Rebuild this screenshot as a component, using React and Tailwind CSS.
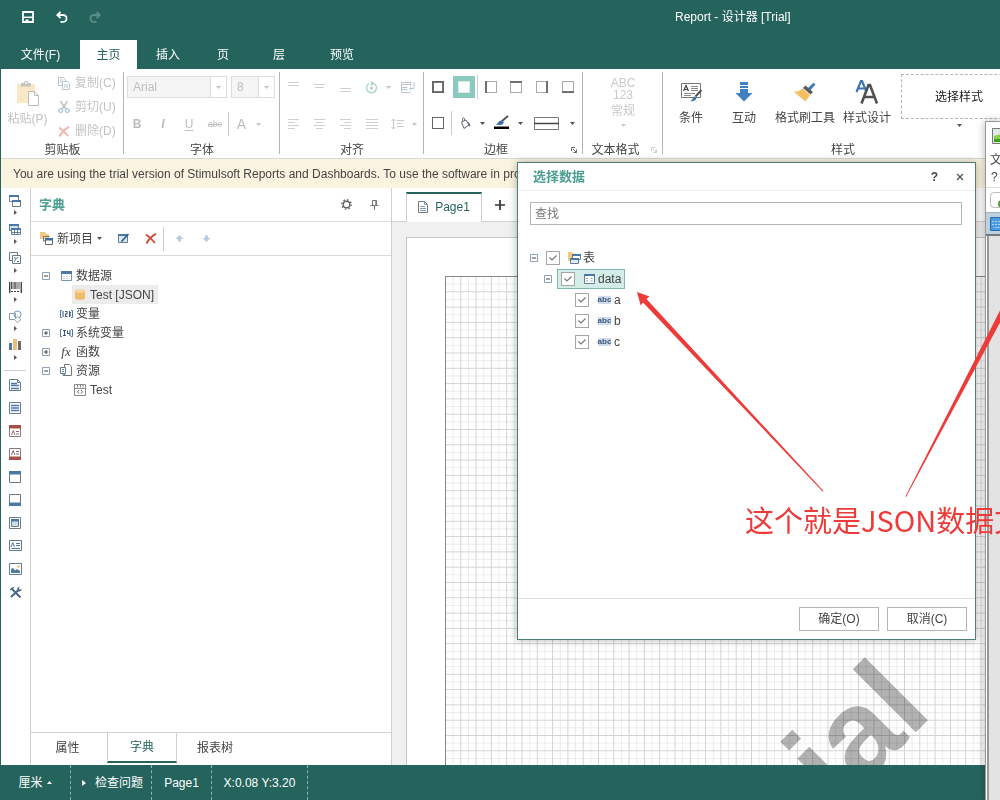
import React from "react";

const Svg = ({ w, h, className = "", children }) => (
  <svg width={w} height={h} viewBox={`0 0 ${w} ${h}`} className={`shrink-0 ${className}`} fill="none" aria-hidden="true">
    {children}
  </svg>
);

const Caret = ({ color = "#555" }) => (
  <Svg w={5} h={3}><path d="M0 0h5L2.5 3z" fill={color} /></Svg>
);

/* ---------- Title bar and ribbon tabs ---------- */

const SaveIcon = () => (
  <Svg w={12} h={12}>
    <path d="M1 1h10v10H1z" stroke="#fff" strokeWidth="1.800" />
    <path d="M2 6.300h8" stroke="#fff" strokeWidth="1.500" />
    <path d="M3.500 8.500h3v2.500h-3z" fill="#fff" />
  </Svg>
);
const UndoIcon = ({ flip, color }) => (
  <Svg w={12} h={12} className={flip ? "-scale-x-100" : ""}>
    <path d="M4.5.8 1.3 4l3.2 3.2M1.5 4h5.6a3.4 3.4 0 0 1 0 6.9H4.5" stroke={color} strokeWidth="1.8" />
  </Svg>
);

const tabs = [
  ["文件(F)", "w-[79px]"],
  ["主页", "w-[57px]"],
  ["插入", "w-[62px]"],
  ["页", "w-[48px]"],
  ["层", "w-[64px]"],
  ["预览", "w-[62px]"],
];

const Header = () => (
  <header className="shrink-0 bg-[#25645c] text-white">
    <div className="flex h-[40px] items-center pb-[6px] pl-[16px]">
      <button aria-label="保存" className="flex h-6 w-6 items-center justify-center"><SaveIcon /></button>
      <button aria-label="撤消" className="ml-[10px] flex h-6 w-6 items-center justify-center"><UndoIcon color="#fff" /></button>
      <button aria-label="恢复" disabled className="ml-[9px] flex h-6 w-6 items-center justify-center"><UndoIcon flip color="#5d8f88" /></button>
      <h1 className="ml-[568px] text-[12px] whitespace-nowrap">Report - 设计器 [Trial]</h1>
    </div>
    <nav className="flex h-[29px] pl-px">
      {tabs.map(([t, w], i) => (
        <button key={t} className={`${w} shrink-0 ${i === 1 ? "bg-white text-[#25645c]" : "text-white"}`}>{t}</button>
      ))}
    </nav>
  </header>
);

/* ---------- Ribbon ---------- */

const Group = ({ label, width, corner, faint, children }) => (
  <section className={`${width} relative flex shrink-0 flex-col`}>
    <div className="flex-1">{children}</div>
    <div className={`flex h-[17px] items-center justify-center text-[#444] ${corner ? "pr-[15px]" : ""}`}>{label}</div>
    <span className="absolute right-0 top-[3px] bottom-[4px] w-px bg-[#b4b4b4]" />
    {corner && (
      <button aria-label={`${label} 设置`} className="absolute right-[6px] bottom-[5px]">
        <Svg w={6} h={6}><path d="M.5 4V.5H4M2 2l3.500 3.500M5.500 2.500v3h-3" stroke={faint ? "#ccc" : "#666"} strokeWidth="1" /></Svg>
      </button>
    )}
  </section>
);

const CopyIcon = () => (
  <Svg w={12} h={13}>
    <path d="M.5.5h5l2 2v6h-7z" stroke="#b9c6d2" fill="#fff" /><path d="M2 3h3M2 5h2" stroke="#b9c6d2" />
    <path d="M4.500 4.500h5l2 2v6h-7z" stroke="#b9c6d2" fill="#fff" /><path d="M6 8h4M6 10h4" stroke="#b9c6d2" />
  </Svg>
);
const CutIcon = () => (
  <Svg w={12} h={12}>
    <path d="M2.500 0 8 8.300M9.500 0 4 8.300" stroke="#b5b5b5" strokeWidth="1.300" />
    <circle cx="2.700" cy="9.500" r="1.900" stroke="#a7c6e4" strokeWidth="1.300" /><circle cx="9.300" cy="9.500" r="1.900" stroke="#a7c6e4" strokeWidth="1.300" />
  </Svg>
);
const CrossIcon = ({ color }) => (
  <Svg w={12} h={11}><path d="M1 1.500c3 2 6 5 9 8.500M11 .8C7 3 3.500 6.500 1.500 10.500" stroke={color} strokeWidth="1.900" /></Svg>
);
const PasteIcon = () => (
  <Svg w={24} h={26}>
    <path d="M1 4h18v19H1z" fill="#f8e8c6" />
    <path d="M5 3h3c0-3 4-3 4 0h3v3.500H5z" fill="#c4c4c4" />
    <circle cx="10" cy="3" r="1" fill="#fff" />
    <path d="M12.500 11.500h6l4 4v10h-10z" fill="#fff" stroke="#bbb" /><path d="M18.500 11.500v4h4" stroke="#bbb" />
  </Svg>
);

const Combo = ({ label, value, width }) => (
  <div className={`${width} relative flex h-[22px] items-center border border-[#dcdcdc]`}>
    <select aria-label={label} disabled className="h-full w-full appearance-none bg-[#f5f5f5] pl-[5px] text-[12px] text-[#bdbdbd] opacity-100">
      <option>{value}</option>
    </select>
    <span className="pointer-events-none absolute inset-y-0 right-0 flex w-[16px] items-center justify-center border-l border-[#dcdcdc] bg-white"><Caret color="#c4c4c4" /></span>
  </div>
);

const Tool = ({ label, w = "w-[26px]", disabled, className = "", children }) => (
  <button aria-label={label} disabled={disabled} className={`flex h-[24px] shrink-0 items-center justify-center ${w} ${className}`}>{children}</button>
);

const Lines = ({ rows, dy = 0 }) => (
  <Svg w={13} h={12}>
    {rows.map(([x1, x2], i) => <path key={i} d={`M${x1} ${i * 3 + 1.5 + dy}H${x2}`} stroke="#cfcfcf" />)}
  </Svg>
);

const BoxIcon = ({ side, bg }) => {
  const d = { left: "M1 0v12", top: "M0 1h12", right: "M11 0v12", bottom: "M0 11h12" }[side];
  return (
    <Svg w={12} h={12}>
      <rect x=".5" y=".5" width="11" height="11" fill={bg || "#fff"} stroke={side === "none" ? "#d9eeea" : side === "all" || side === "thin" ? "#666" : "#aaa"} />
      {side === "all" && <rect x="1" y="1" width="10" height="10" stroke="#666" strokeWidth="1.800" />}
      {d && <path d={d} stroke="#666" strokeWidth="1.800" />}
    </Svg>
  );
};

const ConditionIcon = () => (
  <Svg w={23} h={22}>
    <path d="M1.500 2.500h19v14h-19z" fill="#fff" stroke="#777" />
    <path d="M3.500 10 6 4.500 8.500 10M4.500 8.500h3" stroke="#444" strokeWidth="1.200" />
    <path d="M11 5.500h7M11 7.500h7M11 9.500h7M4 12.500h11M4 14.500h7" stroke="#8a8a8a" />
    <path d="m21.500 9-6 6.500" stroke="#555" strokeWidth="2" />
    <path d="M10 20c3 0 2-4 4.500-4.500 2 .5 2.300 2 1.200 3.200C14.500 20 12 20.500 10 20z" fill="#3c78b8" />
  </Svg>
);
const InteractIcon = () => (
  <Svg w={18} h={20}><path d="M5 0h8v3H5zM5 4h8v2H5zM5 7h8v4h4.500L9 19.500.5 11H5z" fill="#4080c0" /></Svg>
);
const BrushIcon = () => (
  <Svg w={24} h={20}>
    <path d="M15 6 20.500.8l2 1.800-5 5.500z" fill="#3c78b8" />
    <path d="m12.500 3.500 7.500 6.500-2.500 2.500L10 6z" fill="#5c5c5c" />
    <path d="M9.500 6.500 17 13 12.500 19.500.5 9.500c3.500.5 6.500-.8 9-3z" fill="#f3bf5f" />
  </Svg>
);
const StyleIcon = () => (
  <Svg w={24} h={24}>
    <path d="M1.500 12 6 1h1l4.500 11M3.200 8.500h6.800" stroke="#3c78b8" strokeWidth="2.200" />
    <path d="M6.500 23.500 13.500 5h1.500l7 18.500M9 17h11" stroke="#505050" strokeWidth="2.600" />
  </Svg>
);

const BigButton = ({ w, label, icon }) => (
  <button className={`${w} flex shrink-0 flex-col items-center whitespace-nowrap text-[#444]`}>
    <span className="flex h-[26px] items-center">{icon}</span>
    <span className="mt-[4px] leading-[18px]">{label}</span>
  </button>
);

const Ribbon = () => (
  <div className="flex h-[90px] shrink-0 overflow-hidden border-b border-[#d8d8d8] bg-white">
    <Group label="剪贴板" width="w-[123px]">
      <div className="flex h-[72px] text-[#c3c3c3]">
        <button disabled className="flex w-[53px] flex-col items-center pt-[11px] whitespace-nowrap">
          <PasteIcon /><span className="mt-[4px] leading-[18px]">粘贴(P)</span>
        </button>
        <div className="flex flex-col pt-[2px] pl-[4px]">
          {[["复制(C)", <CopyIcon />], ["剪切(U)", <CutIcon />], ["删除(D)", <CrossIcon color="#f2b3ad" />]].map(([t, icon]) => (
            <button key={t} disabled className="flex h-[24px] shrink-0 items-center gap-[5px] whitespace-nowrap">{icon}{t}</button>
          ))}
        </div>
      </div>
    </Group>
    <Group label="字体" width="w-[156px]">
      <div className="flex gap-[4px] pt-[7px] pl-[3px]">
        <Combo label="字体" value="Arial" width="w-[100px]" />
        <Combo label="字号" value="8" width="w-[44px]" />
      </div>
      <div className="flex pt-[14px] text-[12px] text-[#bdbdbd]">
        <Tool label="粗体" disabled><b>B</b></Tool>
        <Tool label="斜体" disabled><i className="font-bold">I</i></Tool>
        <Tool label="下划线" disabled><span className="underline underline-offset-2">U</span></Tool>
        <Tool label="删除线" disabled><span className="text-[9px] line-through">abc</span></Tool>
        <Tool label="字体颜色" disabled className="border-l border-[#ccc]"><span className="text-[14px]">A</span></Tool>
        <Tool label="更多颜色" disabled w="w-[8px]"><Caret color="#c4c4c4" /></Tool>
      </div>
    </Group>
    <Group label="对齐" width="w-[144px]">
      <div className="flex pt-[6px]">
        <Tool label="顶端对齐" disabled><Lines rows={[[1, 12], [1, 12]]} /></Tool>
        <Tool label="垂直居中" disabled><Lines rows={[[1, 12], [2, 11]]} dy={2} /></Tool>
        <Tool label="底端对齐" disabled><Lines rows={[[1, 12], [1, 12]]} dy={6} /></Tool>
        <Tool label="旋转" disabled>
          <Svg w={13} h={13}><path d="M4 2.500A5 5 0 1 0 9 2.500" stroke="#a9d3cd" strokeWidth="1.400" /><path d="M6 0v5l3.500-2.500z" fill="#a9d3cd" /><circle cx="6.500" cy="7" r="1.500" fill="#a9d3cd" /></Svg>
        </Tool>
        <Tool label="旋转选项" disabled w="w-[8px]"><Caret color="#c4c4c4" /></Tool>
        <Tool label="自动换行" disabled className="ml-[3px]">
          <Svg w={14} h={13}><path d="M.5 1.500h9M.5 3.500h9M.5 6.500h6M.5 8.500h6M.5 11.500h9M.5 1v11M9.500 1v4M13 1v6.500H8.500M10.500 5.500l-2 2 2 2" stroke="#bcc8cf" /></Svg>
        </Tool>
      </div>
      <div className="flex pt-[13px]">
        <Tool label="左对齐" disabled><Lines rows={[[1, 12], [1, 8], [1, 12], [1, 8]]} /></Tool>
        <Tool label="居中" disabled><Lines rows={[[1, 12], [3, 10], [1, 12], [3, 10]]} /></Tool>
        <Tool label="右对齐" disabled><Lines rows={[[1, 12], [5, 12], [1, 12], [5, 12]]} /></Tool>
        <Tool label="两端对齐" disabled><Lines rows={[[1, 13], [1, 13], [1, 13], [1, 13]]} /></Tool>
        <Tool label="行距" disabled>
          <Svg w={13} h={12}><path d="M2.500 1v10M.5 3l2-2 2 2M.5 9l2 2 2-2M6 2.500h7M6 5.500h5M6 8.500h7" stroke="#c4cacd" /></Svg>
        </Tool>
        <Tool label="行距选项" disabled w="w-[8px]"><Caret color="#c4c4c4" /></Tool>
      </div>
    </Group>
    <Group label="边框" width="w-[159px]" corner>
      <div className="flex pt-[6px] pl-px">
        <Tool label="全部边框"><BoxIcon side="all" /></Tool>
        <Tool label="无边框"><span className="flex h-[22px] w-[22px] items-center justify-center bg-[#8cc9bf]"><BoxIcon side="none" /></span></Tool>
        <Tool label="左边框" className="border-l border-[#ccc]"><BoxIcon side="left" /></Tool>
        <Tool label="上边框"><BoxIcon side="top" /></Tool>
        <Tool label="右边框"><BoxIcon side="right" /></Tool>
        <Tool label="下边框"><BoxIcon side="bottom" /></Tool>
      </div>
      <div className="flex pt-[12px] pl-px">
        <Tool label="阴影"><BoxIcon side="thin" /></Tool>
        <Tool label="填充" className="border-l border-[#ccc]">
          <Svg w={12} h={13}><path d="M3.500 6V2c0-1.500 2-1.500 2 0v2" stroke="#777" /><path d="M2.500 5 7 3l3 5-5 3.500z" stroke="#666" fill="#fff" /><path d="M8.500 5c2 .3 2.800 2 2.800 5-1-.5-2.300-2-2.800-5z" fill="#5a6f86" /></Svg>
        </Tool>
        <Tool label="填充选项" w="w-[10px]"><Caret /></Tool>
        <Tool label="边框颜色" w="w-[28px]">
          <Svg w={15} h={16}><path d="m14 1-6 5" stroke="#555" strokeWidth="2" /><path d="M1 9.500c3 0 3-3.500 6-4 2.500 0 3.500 2 2 3.500-2 1.500-5 1-8 .5z" fill="#3c6fa8" /><path d="M0 11.500h15v2.500H0z" fill="#000" /></Svg>
        </Tool>
        <Tool label="颜色选项" w="w-[10px]"><Caret /></Tool>
        <Tool label="边框样式" w="w-[42px]">
          <Svg w={25} h={13}><path d="M.5.5h24v12H.5z" stroke="#777" /><path d="M0 6.500h25" stroke="#444" strokeWidth="1.500" /></Svg>
        </Tool>
        <Tool label="样式选项" w="w-[10px]"><Caret /></Tool>
      </div>
    </Group>
    <Group label="文本格式" width="w-[80px]" corner faint>
      <button disabled className="flex w-full flex-col items-center pt-[8px] text-[#c9c9c9]">
        <span className="text-[12px] leading-[12px]">ABC</span>
        <span className="text-[12px] leading-[12px]">123</span>
        <span className="mt-px leading-[18px]">常规</span>
        <span className="mt-[4px]"><Caret color="#ccc" /></span>
      </button>
    </Group>
    <section className="flex w-[360px] shrink-0 flex-col">
      <div className="flex flex-1 pt-[5px]">
        <div className="flex pt-[5px]">
          <BigButton w="w-[56px]" label="条件" icon={<ConditionIcon />} />
          <BigButton w="w-[50px]" label="互动" icon={<InteractIcon />} />
          <BigButton w="w-[72px]" label="格式刷工具" icon={<BrushIcon />} />
          <BigButton w="w-[52px]" label="样式设计" icon={<StyleIcon />} />
        </div>
        <div className="ml-[8px] flex flex-col items-center">
          <button className="h-[45px] w-[116px] border border-dashed border-[#b5b5b5] text-[#222]">选择样式</button>
          <button aria-label="更多样式" className="mt-[5px]"><Caret /></button>
        </div>
      </div>
      <div className="flex h-[17px] items-center justify-center text-[#444]">样式</div>
    </section>
  </div>
);

/* ---------- Left tool strip ---------- */

const B = "#4a79a8";
const G = "#6a7b8a";
const palette = [
  <Svg w={12} h={13}><path d="M.5 1.500h9v6h-9z" stroke={G} fill="#fff" /><path d="M0 1h10v2H0z" fill={B} /><path d="M3.500 6.500h8v6h-8z" stroke={G} fill="#fff" /><path d="M3 6h9v2H3z" fill={B} /></Svg>,
  <Svg w={12} h={13}><path d="M.5 1.500h9v6h-9z" stroke={G} fill="#cfe0ee" /><path d="M0 1h10v2H0z" fill={B} /><path d="M2.500 5.500h9v6h-9zM5.500 6v6M8.500 6v6M3 9.500h8" stroke={G} fill="#fff" /><path d="M2 5h10v2H2z" fill={B} /></Svg>,
  <Svg w={12} h={12}><path d="M.5.5h8v8h-8z" stroke={G} fill="#fff" /><path d="M3.500 3.500h8v8h-8z" stroke={G} fill="#fff" /><path d="M5 9.500c2 0 1-4 4-4M5 6h2M8 9.500h2" stroke={B} /></Svg>,
  <Svg w={13} h={11}><path d="M.7 0v11M6 0v7M12.300 0v11" stroke="#444" strokeWidth="1.400" /><path d="M2.500 0v7M4 0v7M8 0v7M10 0v7" stroke="#555" /><path d="M2 9.500h9" stroke="#444" strokeDasharray="2 1" /></Svg>,
  <Svg w={13} h={13}><path d="M.5 3.500h6v6h-6z" stroke="#8b9cab" fill="#fff" /><circle cx="8.500" cy="4.500" r="3.500" stroke="#6d98c2" /><path d="m8.500 6.500 3.500 3-3.500 3-3-3z" stroke="#8aa8c4" fill="#fff" /></Svg>,
  <Svg w={12} h={12}><path d="M0 4h3v7H0z" fill={B} /><path d="M4 0h4v11H4z" fill="#ecbf77" /><path d="M9 2h3v9H9z" fill="#6b6b6b" /></Svg>,
];
const Frame = ({ children, c = G }) => (
  <Svg w={12} h={12}><path d="M.5.5h11v11H.5z" stroke={c} fill="#fff" />{children}</Svg>
);
const bands = [
  <Svg w={12} h={12}><path d="M.5.5h8l3 3v8H.5z" stroke={G} fill="#fff" /><path d="M8.500.5v3h3" stroke={G} /><path d="M2 4.500h6M2 6.500h8M2 9.500h8" stroke={B} strokeWidth="1.500" /></Svg>,
  <Frame><path d="M2 3.500h8M2 6h8M2 8.500h8" stroke={B} strokeWidth="1.500" /></Frame>,
  <Frame c="#8c7a78"><path d="M0 0h12v3.500H0z" fill="#a94f4a" /><path d="M2.500 10 4.200 5.500 6 10M7 6.500h3M7 9h3" stroke="#8c6a68" /></Frame>,
  <Frame c="#8c7a78"><path d="M0 8.500h12V12H0z" fill="#a94f4a" /><path d="M2.500 7 4.200 2.500 6 7M7 3.500h3M7 6h3" stroke="#8c6a68" /></Frame>,
  <Frame><path d="M0 0h12v3.500H0z" fill={B} /></Frame>,
  <Frame><path d="M0 8.500h12V12H0z" fill={B} /></Frame>,
  <Frame><path d="M2.500 2.500h7v7h-7z" stroke={G} fill="#cfdde9" /><path d="M2 2h8v2.500H2z" fill={B} /></Frame>,
  <Svg w={13} h={11}><path d="M.5.5h12v10H.5z" stroke={G} fill="#fff" /><path d="M2 7 3.800 2.500 5.500 7M7 3.500h4M7 5.500h4M2.500 8.500H11" stroke={B} /></Svg>,
  <Svg w={13} h={12}><path d="M.5.5h12v11H.5z" stroke={G} fill="#fff" /><path d="M2 10V6l2-1 2 2.500L8 6l3 2v2z" fill={B} /><circle cx="9.500" cy="3.500" r="1.200" fill="#ecbf77" /></Svg>,
  <Svg w={13} h={12}><path d="m3 3 8.500 8.500M9.500 4 2 11" stroke="#4a6785" strokeWidth="2" /><path d="M.8 4.500C1 2 3 .8 5.500 1L3.500 3.500z" fill="#4a6785" /><path d="M8.500 4.500C7.500 2.500 9 .8 10.800 1L9.800 2.800l1 1 1.700-1c.3 2-1.500 3.200-3 2.700z" fill="#4a6785" /></Svg>,
];

const ToolStrip = () => (
  <aside className="flex w-[30px] shrink-0 flex-col items-center border-r border-[#cfcfcf] bg-white pr-px">
    <div className="flex flex-col pt-[4px]">
      {palette.map((icon, i) => (
        <button key={i} aria-label={`组件 ${i + 1}`} className="flex h-[29px] w-[24px] flex-col items-center">
          <span className="flex h-[16px] items-center">{icon}</span>
          <span className="flex h-[9px] items-center"><Svg w={3} h={5}><path d="M0 0v5l3-2.500z" fill="#555" /></Svg></span>
        </button>
      ))}
    </div>
    <div className="mt-[4px] h-px w-[22px] bg-[#cfcfcf]" />
    <div className="flex flex-col pt-[2px]">
      {bands.map((icon, i) => (
        <button key={i} aria-label={`区段 ${i + 1}`} className="flex h-[23px] w-[24px] items-center justify-center">{icon}</button>
      ))}
    </div>
  </aside>
);

/* ---------- Dictionary panel ---------- */

const Expander = ({ plus }) => (
  <button aria-label={plus ? "展开" : "折叠"} className="flex w-[8px] shrink-0">
    <Svg w={8} h={8}><path d="M.5.5h7v7h-7z" stroke="#8aa0b4" /><path d="M2 4h4" stroke="#444" />{plus && <path d="M4 2v4" stroke="#444" />}</Svg>
  </button>
);
const TableIcon = () => (
  <Svg w={11} h={10}><path d="M.5.5h10v9H.5z" stroke="#7b95ad" fill="#fff" /><path d="M0 0h11v3H0z" fill={B} /><path d="M2 5.500h7M2 7.500h7" stroke="#c5d2dd" strokeDasharray="2 1" /></Svg>
);
const DbIcon = () => (
  <Svg w={10} h={11}><path d="M0 2v7c0 2.500 10 2.500 10 0V2z" fill="#f0bd6a" /><ellipse cx="5" cy="2" rx="5" ry="1.800" fill="#f7d499" /></Svg>
);
const VarIcon = ({ sys }) => (
  <Svg w={13} h={8}><path d="M2 .5H.5v7H2M11 .5h1.500v7H11" stroke={B} /><path d={sys ? "M3 1.500h3M4.500 2v5M3 6.500h3M7.500 1.500V4.500h3M10 1v6" : "M3 1v6M5 1.500h2v2.500H5.500V6.500h2M9.500 1v6M11 2 9.500 4 11 6"} stroke="#41597a" strokeWidth="1.100" /></Svg>
);
const ResIcon = () => (
  <Svg w={12} h={13}><path d="M4.500.5h5l2 2v9h-7z" stroke="#777" fill="#fff" /><path d="M.5 3.500h5v6h-5z" stroke="#5f7b96" fill="#fff" /><path d="M2 5.500h2M2 7.500h2M3 10v1.500h4" stroke="#5f7b96" /></Svg>
);
const JsonIcon = () => (
  <Svg w={12} h={12}><path d="M.5.5h11v11H.5zM.5 4.500h11M3.500.5v3M6.500.5v3M9 .5v3" stroke="#8a8a8a" /><path d="M5 6 3.500 7.800 5 9.500M7 6l1.500 1.800L7 9.500" stroke="#666" /></Svg>
);

const tree = [
  { t: "数据源", icon: <TableIcon />, exp: "minus" },
  { t: "Test [JSON]", icon: <DbIcon />, child: true, active: true },
  { t: "变量", icon: <VarIcon /> },
  { t: "系统变量", icon: <VarIcon sys />, exp: "plus" },
  { t: "函数", icon: <i className="font-['Liberation_Serif',serif] text-[13px]">fx</i>, exp: "plus" },
  { t: "资源", icon: <ResIcon />, exp: "minus" },
  { t: "Test", icon: <JsonIcon />, child: true },
];

const Move = ({ down }) => (
  <Svg w={9} h={7} className={down ? "rotate-180" : ""}><path d="m4.500 0 4 4H6v2.500H3V4H.5z" fill="#b4cde3" /></Svg>
);

const Dictionary = () => (
  <section className="flex w-[361px] shrink-0 flex-col border-r border-[#cfcfcf] bg-white text-[#444]">
    <div className="flex h-[34px] items-center border-b border-[#dadada] pl-[8px] pr-[12px]">
      <h2 className="flex-1 text-[13px] font-bold text-[#4a9e92]">字典</h2>
      <button aria-label="设置">
        <Svg w={11} h={11}><circle cx="5.500" cy="5.500" r="3.300" stroke="#666" strokeWidth="1.400" /><circle cx="5.500" cy="5.500" r="4.700" stroke="#666" strokeWidth="1.500" strokeDasharray="1.500 2.190" /></Svg>
      </button>
      <button aria-label="固定" className="ml-[18px]">
        <Svg w={9} h={10}><path d="M2.500.5h4v5h-4zM.5 5.500h8M4.500 6v4M5.800.5v5" stroke="#777" /></Svg>
      </button>
    </div>
    <div className="flex h-[34px] items-center border-b border-[#dadada] pl-[9px]">
      <button className="flex items-center gap-[4px] whitespace-nowrap">
        <Svg w={13} h={13}><path d="M0 0h5l1 2h3v5H0z" fill="#f0c984" /><path d="M4.500 4.500h5M3.500 4v5H5" stroke="#777" /><path d="M5.500 6.500h7v6h-7z" stroke="#666" fill="#fff" /><path d="M5 6h8v2.500H5z" fill="#3a6ea5" /></Svg>
        新项目<Caret />
      </button>
      <button aria-label="编辑" className="ml-[16px]">
        <Svg w={12} h={11}><path d="M.5 1.500h9v8h-9z" stroke={G} fill="#dbe8f3" /><path d="M0 1h10v2H0z" fill={B} /><path d="m3.500 8.500 7-7.500" stroke="#2f6296" strokeWidth="1.800" /></Svg>
      </button>
      <button aria-label="删除" className="ml-[15px]"><CrossIcon color="#cf4b35" /></button>
      <span className="ml-[6px] h-[24px] w-px bg-[#cfcfcf]" />
      <button aria-label="上移" disabled className="ml-[11px]"><Move /></button>
      <button aria-label="下移" disabled className="ml-[18px]"><Move down /></button>
    </div>
    <ul className="flex flex-1 flex-col pt-[10px] pl-[11px]">
      {tree.map((n, i) => (
        <li key={i} className="flex h-[19px] items-center">
          <span className="flex w-[16px] shrink-0">{n.exp && <Expander plus={n.exp === "plus"} />}</span>
          <span className={`flex h-[19px] items-center gap-[2px] whitespace-nowrap ${n.child ? "ml-[14px] pr-[4px]" : ""} ${n.active ? "bg-[#ececec]" : ""}`}>
            <span className="flex w-[16px] shrink-0 justify-center">{n.icon}</span>{n.t}
          </span>
        </li>
      ))}
    </ul>
    <div className="flex h-[33px] border-t border-[#cfcfcf]">
      <button className="h-[29px] w-[76px] pr-[3px]">属性</button>
      <button className="h-[30px] w-[70px] border-x border-b-2 border-x-[#cfcfcf] border-b-[#25645c] text-[#25645c]">字典</button>
      <button className="h-[29px] w-[76px]">报表树</button>
    </div>
  </section>
);

/* ---------- Report canvas ---------- */

const Canvas = () => (
  <main className="flex min-w-0 flex-1 flex-col bg-[#f0f0f0]">
    <div className="flex h-[34px] shrink-0 items-end border-b border-[#d2d2d2] bg-white pl-[14px]">
      <button className="-mb-px flex h-[30px] w-[76px] items-center justify-center gap-[7px] border-x border-t-2 border-x-[#d2d2d2] border-t-[#25645c] bg-white pb-[3px] text-[#25645c]">
        <Svg w={10} h={12}><path d="M.5.5h6l3 3v8h-9z" stroke="#777" /><path d="M6.500.5v3h3M2 5.500h5M2 7.500h6M2 9.500h6" stroke="#7c9bb8" /></Svg>
        Page1
      </button>
      <button aria-label="添加页" className="ml-[13px] flex h-[32px] items-center"><Svg w={10} h={10}><path d="M5 0v10M0 5h10" stroke="#333" strokeWidth="1.700" /></Svg></button>
    </div>
    <div className="flex min-h-0 flex-1 overflow-hidden pt-[15px] pl-[14px]">
      <div className="flex flex-1 border-t border-l border-[#c6c6c6] bg-white pt-[38px] pl-[38px]">
        <svg className="min-h-0 flex-1" aria-label="报表页面">
          <defs>
            <pattern id="grid" width="15.3" height="15.3" patternUnits="userSpaceOnUse">
              <path d="M8.150 0v15.300M0 8.150h15.300" stroke="#ebebeb" />
              <path d="M.5 0v15.300M0 .5h15.300" stroke="#d2d2d2" />
            </pattern>
          </defs>
          <text transform="translate(489 438) rotate(-45)" textAnchor="end" fill="#b2b2b2" className="font-['Liberation_Sans',Arial,sans-serif] text-[123px] font-bold">Trial</text>
          <rect width="100%" height="100%" fill="url(#grid)" className="mix-blend-multiply" />
          <path d="M.5 2000V.5H2000" stroke="#888" fill="none" />
        </svg>
      </div>
    </div>
  </main>
);

/* ---------- Status bar ---------- */

const StatusBar = () => (
  <footer className="flex h-[35px] shrink-0 bg-[#25645c] text-white">
    <button className="flex w-[71px] items-center justify-center gap-[4px] border-r border-dashed border-[#8fb3ae]">厘米<span className="rotate-180"><Caret color="#fff" /></span></button>
    <button className="flex w-[81px] items-center justify-center gap-[9px] border-r border-dashed border-[#8fb3ae] pl-[3px] whitespace-nowrap"><Svg w={4} h={6}><path d="M0 0v6l4-3z" fill="#fff" /></Svg>检查问题</button>
    <span className="flex w-[60px] items-center justify-center border-r border-dashed border-[#8fb3ae]">Page1</span>
    <span className="flex w-[96px] items-center justify-center border-r border-dashed border-[#8fb3ae] whitespace-nowrap">X:0.08 Y:3.20</span>
  </footer>
);

/* ---------- Data selection dialog ---------- */

const StackIcon = () => (
  <Svg w={13} h={12}><path d="M0 0h4l1 1.500h3V9H0z" fill="#f0c984" /><path d="M4.500 2.500h8v5h-8z" stroke={G} fill="#fff" /><path d="M4 2h9v2H4z" fill={B} /><path d="M2.500 6.500h8v5h-8z" stroke={G} fill="#dde9f3" /><path d="M2 6h9v2H2z" fill={B} /></Svg>
);
const AbcIcon = () => (
  <span className="flex h-[8px] w-[13px] items-center justify-center bg-[#cfdcf0] text-[8px] leading-[8px] font-bold text-[#3f5678]" aria-hidden="true">abc</span>
);
const DataIcon = () => (
  <Svg w={11} h={10}><path d="M.5.5h10v9H.5z" stroke="#5f7f9d" fill="#fff" /><path d="M0 0h11v2H0z" fill={B} /><path d="M2 4.500h7M2 7h7" stroke="#8ea6bb" strokeDasharray="2 2.500" /></Svg>
);

const Check = ({ id }) => (
  <span className="relative flex h-[14px] w-[14px] shrink-0">
    <input id={id} type="checkbox" defaultChecked className="peer h-[14px] w-[14px] appearance-none border border-[#a5a5a5] bg-white" />
    <svg className="pointer-events-none absolute inset-0 hidden peer-checked:block" width="14" height="14" viewBox="0 0 14 14" fill="none" aria-hidden="true"><path d="m3.500 6.500 2.500 2.500L10.500 4.500" stroke="#777" strokeWidth="1.200" /></svg>
  </span>
);

const Leaf = ({ id, t }) => (
  <li className="flex h-[21px] items-center pl-[45px]">
    <Check id={id} /><label htmlFor={id} className="ml-[9px] flex items-center gap-[3px]"><AbcIcon />{t}</label>
  </li>
);

const Dialog = () => (
  <div role="dialog" aria-label="选择数据" className="absolute top-[162px] left-[517px] flex h-[478px] w-[459px] flex-col border border-[#4d7f78] bg-white text-[#444] shadow-[0_0_8px_rgba(0,0,0,0.3)]">
    <div className="flex h-[28px] shrink-0 items-center border-b border-[#ededed] pl-[15px] pr-[11px]">
      <h2 className="flex-1 text-[13px] font-bold text-[#4a9e92]">选择数据</h2>
      <button aria-label="帮助" className="font-bold">?</button>
      <button aria-label="关闭" className="ml-[18px]"><Svg w={8} h={8}><path d="m1 1 6 6M7 1 1 7" stroke="#555" strokeWidth="1.300" /></Svg></button>
    </div>
    <div className="flex-1 px-[12px] pt-[11px]">
      <input aria-label="查找" placeholder="查找" className="h-[23px] w-[432px] border border-[#b5b5b5] px-[4px] placeholder:text-[#777]" />
      <ul className="flex flex-col pt-[22px]">
        <li className="flex h-[21px] items-center">
          <Expander /><span className="w-[8px]" /><Check id="root-tables" />
          <label htmlFor="root-tables" className="ml-[8px] flex items-center gap-[2px]"><StackIcon />表</label>
        </li>
        <li className="flex h-[21px] items-center pl-[14px]">
          <Expander />
          <span className="ml-[5px] flex h-[20px] items-center border border-[#7fb8ae] bg-[#d3ece8] pl-[3px] pr-[3px]">
            <Check id="tbl-data" />
            <label htmlFor="tbl-data" className="ml-[9px] flex items-center gap-[3px]"><DataIcon />data</label>
          </span>
        </li>
        <Leaf id="col-a" t="a" />
        <Leaf id="col-b" t="b" />
        <Leaf id="col-c" t="c" />
      </ul>
    </div>
    <div className="flex h-[41px] shrink-0 items-center justify-end gap-[8px] border-t border-[#dedede] pr-[8px]">
      <button className="h-[24px] w-[80px] border border-[#b5b5b5]">确定(O)</button>
      <button className="h-[24px] w-[80px] border border-[#b5b5b5]">取消(C)</button>
    </div>
  </div>
);

/* ---------- Neighbouring window ---------- */

const SideWindow = () => (
  <div className="absolute top-[121px] right-0 bottom-0 left-[985px] flex flex-col overflow-hidden border-t border-l border-[#9a9a9a] bg-white text-[#444] shadow-[0_0_8px_rgba(0,0,0,0.3)]">
    <div className="flex h-[28px] shrink-0 items-center pl-[6px]">
      <Svg w={16} h={16}><path d="M.5.5h15v15H.5z" stroke="#777" fill="#dfe9e6" /><path d="M2 8c4-2 9-2 13 0v6H2z" fill="#8fd04a" /><path d="M2 11h13v3H2z" fill="#3f9f1e" /></Svg>
    </div>
    <span className="h-[20px] shrink-0 pl-[4px] leading-[20px] whitespace-nowrap">文</span>
    <span className="h-[17px] shrink-0 pl-[5px] leading-[15px] whitespace-nowrap">?</span>
    <div className="flex h-[25px] shrink-0 items-center border-t border-[#ddd] pl-[4px]">
      <span className="flex h-[16px] w-[24px] shrink-0 items-end rounded-sm border border-[#bbb] pl-[6px]"><Svg w={10} h={8}><circle cx="5" cy="5" r="4" fill="#5a9a3a" /></Svg></span>
    </div>
    <div className="flex h-[24px] shrink-0 items-center border-t border-b-2 border-t-[#9db4c6] border-b-[#777] bg-[#bdd0df] pl-[4px]">
      <Svg w={20} h={14}><path d="M.5.5h19v13H.5z" fill="#4a9be0" stroke="#2b6aa5" /><path d="M2 4.500h16M2 7.500h16M4.500 10.500h10" stroke="#a9d2f5" strokeDasharray="2 1" /></Svg>
    </div>
    <div className="ml-px flex-1 border-l-2 border-[#999] bg-[#e3e3e3]" />
  </div>
);

/* ---------- Callout ---------- */

const Callout = () => (
  <div className="pointer-events-none absolute inset-0 overflow-hidden">
    <svg className="absolute inset-0 h-full w-full" aria-hidden="true" fill="#ee3a38">
      <path d="M637 292l12.500 4.500-3 2.500L823.500 491l-.7.700L643 302.500l-2.300 3z" />
      <path d="M906 497l-.6-.5L1000 310.500v12z" />
    </svg>
    <p className="absolute top-[498px] left-[745px] font-['Noto_Sans_CJK_SC',sans-serif] text-[29px] leading-[43px] whitespace-nowrap text-[#ee3a38]">这个就是JSON数据文</p>
  </div>
);

export default function App() {
  return (
    <div className="relative flex h-screen flex-col overflow-hidden bg-white font-['Liberation_Sans','Noto_Sans_CJK_SC',sans-serif] text-[12px] leading-[16px]">
      <Header />
      <div className="flex min-h-0 flex-1 flex-col border-l border-[#25645c]">
        <Ribbon />
        <div className="flex h-[29px] shrink-0 items-center overflow-hidden bg-[#faf3df] pl-[12px] whitespace-nowrap text-[#444]">
          You are using the trial version of Stimulsoft Reports and Dashboards. To use the software in production, you need a license.
        </div>
        <div className="flex min-h-0 flex-1">
          <ToolStrip />
          <Dictionary />
          <Canvas />
        </div>
      </div>
      <StatusBar />
      <Dialog />
      <SideWindow />
      <Callout />
    </div>
  );
}
